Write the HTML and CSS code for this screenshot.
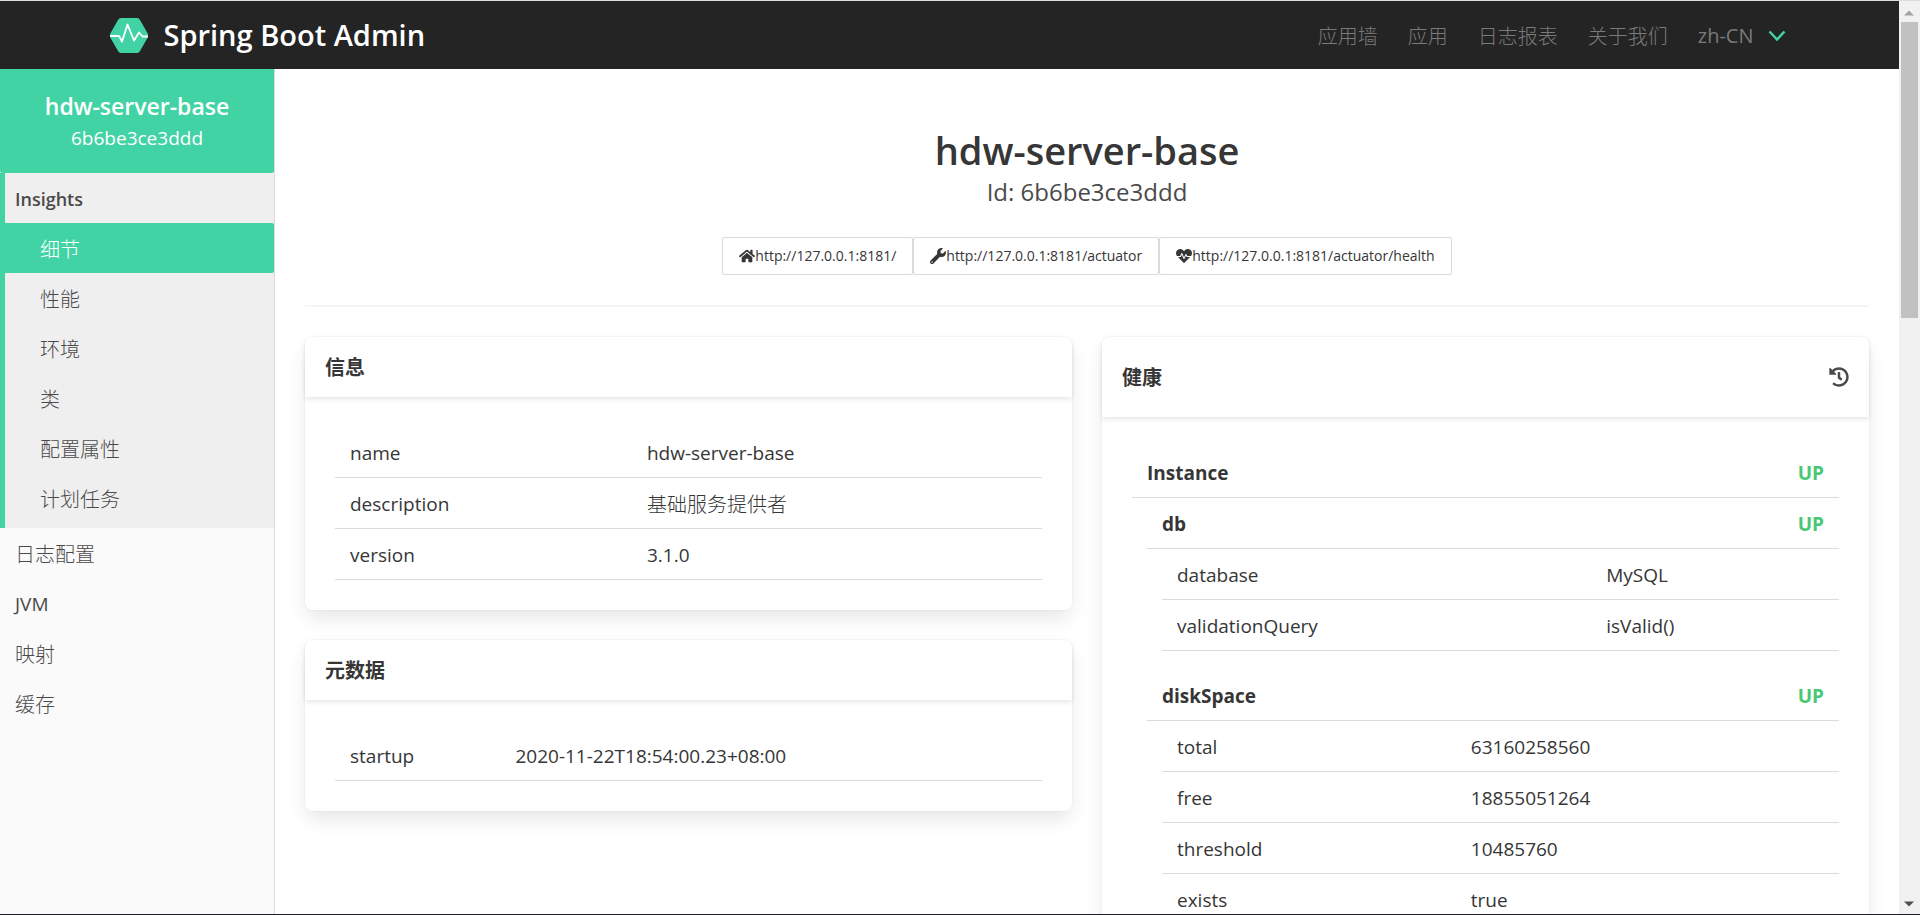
FILE: index.html
```html
<!DOCTYPE html>
<html lang="zh-CN">
<head>
<meta charset="utf-8">
<title>Spring Boot Admin</title>
<link rel="stylesheet" href="styles.css">
</head>
<body>
<div class="window">
  <div class="page">
    <header class="navbar">
      <div class="navbar-inner">
        <a class="brand" href="#">
          <svg class="brand-logo" viewBox="0 0 38 35" aria-hidden="true">
            <path fill="#42d3a5" d="M11 0h16q2 0 3 2l8 14q1 1.500 0 3l-8 14q-1 2-3 2H11q-2 0-3-2L0 19q-1-1.500 0-3L8 2q1-2 3-2z"/>
            <path fill="none" stroke="#fff" stroke-width="1.800" stroke-linejoin="round" d="M0 18h9l3 5.500L17.500 6.500 24 22.500l5-8 3.500 4H38"/>
          </svg>
          <span>Spring Boot Admin</span>
        </a>
        <nav class="navbar-menu">
          <a class="cjk" href="#">应用墙</a>
          <a class="cjk" href="#">应用</a>
          <a class="cjk" href="#">日志报表</a>
          <a class="cjk" href="#">关于我们</a>
          <button class="language" type="button">zh-CN
            <svg class="chevron" viewBox="0 0 18 12" aria-hidden="true"><path fill="none" stroke="#42d3a5" stroke-width="2.500" d="M1.500 1.500L9 9.500l7.500-8"/></svg>
          </button>
        </nav>
      </div>
    </header>
    <div class="content">
      <aside class="sidebar">
        <a class="instance" href="#">
          <strong>hdw-server-base</strong>
          <span>6b6be3ce3ddd</span>
        </a>
        <div class="group">
          <a class="group-title" href="#">Insights</a>
          <a class="sub cjk active" href="#">细节</a>
          <a class="sub cjk" href="#">性能</a>
          <a class="sub cjk" href="#">环境</a>
          <a class="sub cjk" href="#">类</a>
          <a class="sub cjk" href="#">配置属性</a>
          <a class="sub cjk" href="#">计划任务</a>
        </div>
        <a class="item cjk" href="#">日志配置</a>
        <a class="item" href="#">JVM</a>
        <a class="item cjk" href="#">映射</a>
        <a class="item cjk" href="#">缓存</a>
      </aside>
      <main class="main">
        <div class="hero">
          <h1>hdw-server-base</h1>
          <p>Id: 6b6be3ce3ddd</p>
          <div class="links">
            <a href="#"><svg class="icon" viewBox="0 0 576 512" aria-hidden="true"><path d="M280.370 148.260L96 300.110V464a16 16 0 0 0 16 16l112.060-.290a16 16 0 0 0 15.920-16V368a16 16 0 0 1 16-16h64a16 16 0 0 1 16 16v95.640a16 16 0 0 0 16 16.050L464 480a16 16 0 0 0 16-16V300L295.670 148.260a12.190 12.190 0 0 0-15.300 0zM571.600 251.470L488 182.560V44.050a12 12 0 0 0-12-12h-56a12 12 0 0 0-12 12v72.610L318.470 43a48 48 0 0 0-61 0L4.340 251.470a12 12 0 0 0-1.600 16.900l25.500 31A12 12 0 0 0 45.150 301l235.220-193.740a12.190 12.190 0 0 1 15.300 0L530.900 301a12 12 0 0 0 16.900-1.600l25.500-31a12 12 0 0 0-1.700-16.930z"/></svg>http://127.0.0.1:8181/</a>
            <a href="#"><svg class="icon" viewBox="0 0 512 512" aria-hidden="true"><path d="M507.730 109.100c-2.240-9.030-13.540-12.090-20.120-5.510l-74.360 74.360-67.880-11.310-11.310-67.880 74.360-74.360c6.620-6.620 3.430-17.900-5.660-20.160-47.380-11.740-99.550.910-136.580 37.930-39.640 39.640-50.550 97.100-34.050 147.200L18.740 402.760c-24.990 24.990-24.990 65.510 0 90.500 24.990 24.990 65.510 24.990 90.500 0l213.210-213.210c50.120 16.710 107.470 5.680 147.370-34.220 37.070-37.070 49.700-89.320 37.910-136.730zM64 472c-13.250 0-24-10.750-24-24 0-13.260 10.750-24 24-24s24 10.740 24 24c0 13.250-10.750 24-24 24z"/></svg>http://127.0.0.1:8181/actuator</a>
            <a href="#"><svg class="icon" viewBox="0 0 512 512" aria-hidden="true"><path d="M320.200 243.800l-49.700 99.400c-6 12.100-23.400 11.700-28.900-.6l-56.900-126.300-30 71.700H60.600l182.500 186.500c7.100 7.300 18.600 7.300 25.700 0L451.400 288H342.300l-22.100-44.200zM473.700 73.900l-2.400-2.500c-51.500-52.600-135.800-52.600-187.400 0L256 100l-27.900-28.500c-51.500-52.700-135.900-52.700-187.400 0l-2.400 2.400C-10.400 123.700-12.500 203 31 256h102.400l35.900-86.200c5.400-12.900 23.600-13.100 29.300-.4l58.200 129.300 49-97.900c5.900-11.800 22.700-11.800 28.600 0l27.600 55.200H481c43.500-53 41.400-132.300-7.300-182.100z"/></svg>http://127.0.0.1:8181/actuator/health</a>
          </div>
        </div>
        <hr class="divider">
        <div class="columns">
          <div class="column">
            <section class="card">
              <header class="card-header"><h2>信息</h2></header>
              <div class="card-body">
                <table class="table">
                  <colgroup><col class="col-info"><col></colgroup>
                  <tr><td>name</td><td>hdw-server-base</td></tr>
                  <tr><td>description</td><td class="cjk">基础服务提供者</td></tr>
                  <tr><td>version</td><td>3.1.0</td></tr>
                </table>
              </div>
            </section>
            <section class="card">
              <header class="card-header"><h2>元数据</h2></header>
              <div class="card-body">
                <table class="table">
                  <colgroup><col class="col-meta"><col></colgroup>
                  <tr><td>startup</td><td>2020-11-22T18:54:00.23+08:00</td></tr>
                </table>
              </div>
            </section>
          </div>
          <div class="column">
            <section class="card">
              <header class="card-header tall">
                <h2>健康</h2>
                <button class="history" type="button" aria-label="history"><svg viewBox="0 0 512 512" aria-hidden="true"><path d="M504 255.531c.253 136.640-111.180 248.372-247.820 248.468-59.015.042-113.223-20.530-155.822-54.911-11.077-8.940-11.905-25.541-1.839-35.607l11.267-11.267c8.609-8.609 22.353-9.551 31.891-1.984C173.062 425.135 212.781 440 256 440c101.705 0 184-82.311 184-184 0-101.705-82.311-184-184-184-48.814 0-93.149 18.969-126.068 49.932l50.754 50.754c10.080 10.080 2.941 27.314-11.313 27.314H24c-8.837 0-16-7.163-16-16V38.627c0-14.254 17.234-21.393 27.314-11.314l49.372 49.372C129.209 34.136 189.552 8 256 8c136.810 0 247.747 110.780 248 247.531zm-180.912 78.784l9.823-12.630c8.138-10.463 6.253-25.542-4.210-33.679L288 256.349V152c0-13.255-10.745-24-24-24h-16c-13.255 0-24 10.745-24 24v135.651l65.409 50.874c10.463 8.137 25.541 6.253 33.679-4.210z"/></svg></button>
              </header>
              <div class="card-body">
                <div class="status"><span>Instance</span><span class="up">UP</span></div>
                <div class="nested">
                  <div class="status"><span>db</span><span class="up">UP</span></div>
                  <div class="nested details">
                    <table class="table">
                      <colgroup><col class="col-db"><col></colgroup>
                      <tr><td>database</td><td>MySQL</td></tr>
                      <tr><td>validationQuery</td><td>isValid()</td></tr>
                    </table>
                  </div>
                  <div class="status"><span>diskSpace</span><span class="up">UP</span></div>
                  <div class="nested details">
                    <table class="table">
                      <colgroup><col class="col-disk"><col></colgroup>
                      <tr><td>total</td><td>63160258560</td></tr>
                      <tr><td>free</td><td>18855051264</td></tr>
                      <tr><td>threshold</td><td>10485760</td></tr>
                      <tr><td>exists</td><td>true</td></tr>
                    </table>
                  </div>
                </div>
              </div>
            </section>
          </div>
        </div>
      </main>
    </div>
  </div>
  <div class="scrollbar" aria-hidden="true">
    <svg class="arrow" viewBox="0 0 20 20"><path fill="#a3a3a3" d="M5 14h10l-5-5z"/></svg>
    <div class="track"><div class="thumb"></div></div>
    <svg class="arrow" viewBox="0 0 20 20"><path fill="#505050" d="M5 8h10l-5 5z"/></svg>
  </div>
</div>
</body>
</html>
```
FILE: styles.css
```css
* {
  box-sizing: border-box;
}

body {
  margin: 0;
  font: 19px/30px "Open Sans", "Noto Sans", "Noto Sans CJK SC", sans-serif;
  color: #363636;
  background: #fff;
}

a {
  color: inherit;
  text-decoration: none;
}

button {
  border: 0;
  padding: 0;
  background: none;
  font: inherit;
  color: inherit;
}

h1,
h2,
p {
  margin: 0;
}

.cjk {
  font-family: "Noto Sans CJK SC", sans-serif;
  font-size: 20px;
  font-weight: 300;
}

.window {
  display: flex;
  height: 100vh;
  overflow: hidden;
  border-top: 1px solid #d9dce1;
  border-bottom: 1px solid #1e1e20;
}

.page {
  flex: 1;
  min-width: 0;
  display: flex;
  flex-direction: column;
}

/* Top bar */
.navbar {
  flex: none;
  height: 68px;
  background: #242424;
}

.navbar-inner {
  max-width: 1680px;
  height: 100%;
  margin: 0 auto;
  display: flex;
  justify-content: space-between;
  align-items: center;
}

.brand {
  display: flex;
  align-items: center;
  gap: 16px;
  color: #fff;
  font-size: 29px;
  font-weight: 600;
}

.brand-logo {
  width: 38px;
  height: 35px;
}

.navbar-menu {
  display: flex;
  align-items: center;
  gap: 30px;
  padding-top: 2px;
  color: #7a7a7a;
  font-size: 20px;
}

.language {
  display: flex;
  align-items: center;
  gap: 14px;
  padding-right: 4px;
}

.chevron {
  width: 18px;
  height: 12px;
}

/* Side menu */
.content {
  flex: 1;
  min-height: 0;
  display: flex;
}

.sidebar {
  flex: none;
  width: 275px;
  border-right: 1px solid #dbdbdb;
  background: #fafafa;
  color: #4a4a4a;
}

.instance {
  display: flex;
  flex-direction: column;
  align-items: center;
  height: 104px;
  padding: 20px 15px;
  border-radius: 0 0 2px 2px;
  background: #42d3a5;
  color: #fff;
}

.instance strong {
  line-height: 34px;
  font-size: 23px;
  font-weight: 600;
}

.group {
  padding-bottom: 5px;
  border-left: 5px solid #42d3a5;
  background: #efefef;
}

.group-title,
.item,
.sub {
  display: block;
  padding: 11px 15px 9px;
}

.group-title {
  padding-left: 10px;
  font-size: 18px;
  font-weight: 600;
}

.sub {
  padding-left: 35px;
}

.sub.active {
  border-radius: 0 2px 2px 0;
  background: #42d3a5;
  color: #fff;
}

/* Page heading */
.main {
  flex: 1;
  min-width: 0;
  overflow: hidden;
  padding: 60px 30px 30px;
}

.hero {
  text-align: center;
}

.hero h1 {
  line-height: 43px;
  font-size: 38px;
  font-weight: 600;
}

.hero p {
  line-height: 40px;
  font-size: 24px;
  color: #4a4a4a;
}

.links {
  display: flex;
  justify-content: center;
  margin-top: 25px;
}

.links a {
  display: flex;
  align-items: center;
  height: 38px;
  padding: 0 16px;
  border: 1px solid #dbdbdb;
  border-radius: 2px;
  font-size: 14px;
}

.icon {
  width: 16px;
  height: 16px;
  fill: #363636;
}

.divider {
  height: 2px;
  margin: 30px 0;
  border: 0;
  background: #f5f5f5;
}

/* Cards */
.columns {
  display: grid;
  grid-template-columns: 1fr 1fr;
  gap: 30px;
}

.column {
  display: flex;
  flex-direction: column;
  gap: 30px;
}

.card {
  border-radius: 8px;
  background: #fff;
  box-shadow: 0 10px 20px -2px rgba(10, 10, 10, 0.1), 0 0 0 1px rgba(10, 10, 10, 0.02);
}

.card-header {
  display: flex;
  align-items: center;
  justify-content: space-between;
  height: 60px;
  padding: 0 20px;
  border-radius: 8px 8px 0 0;
  box-shadow: 0 2px 5px rgba(10, 10, 10, 0.1);
}

.card-header.tall {
  height: 80px;
}

.card-header h2 {
  padding-top: 2px;
  font-size: 20px;
  font-weight: 700;
}

.history {
  width: 20px;
  height: 20px;
}

.history svg {
  display: block;
  fill: #4a4a4a;
}

.card-body {
  padding: 30px;
}

.table {
  width: 100%;
  table-layout: fixed;
  border-collapse: separate;
  border-spacing: 0;
}

.table td {
  height: 51px;
  padding: 11px 15px 9px;
  border-bottom: 1px solid #dbdbdb;
}

.col-info {
  width: 42%;
}

.col-meta {
  width: 23.4%;
}

.col-db {
  width: 63.4%;
}

.col-disk {
  width: 43.4%;
}

.status {
  display: flex;
  justify-content: space-between;
  height: 51px;
  padding: 11px 15px 9px;
  border-bottom: 1px solid #dbdbdb;
  font-weight: 700;
}

.up {
  color: #48c774;
}

.nested {
  margin-left: 15px;
}

.details {
  margin-bottom: 19px;
}

/* Window scrollbar */
.scrollbar {
  flex: none;
  width: 21px;
  display: flex;
  flex-direction: column;
  background: #f1f1f1;
}

.arrow {
  width: 20px;
  height: 21px;
}

.track {
  flex: 1;
  padding: 0 2px;
}

.thumb {
  height: 34%;
  background: #c1c1c1;
}
```
